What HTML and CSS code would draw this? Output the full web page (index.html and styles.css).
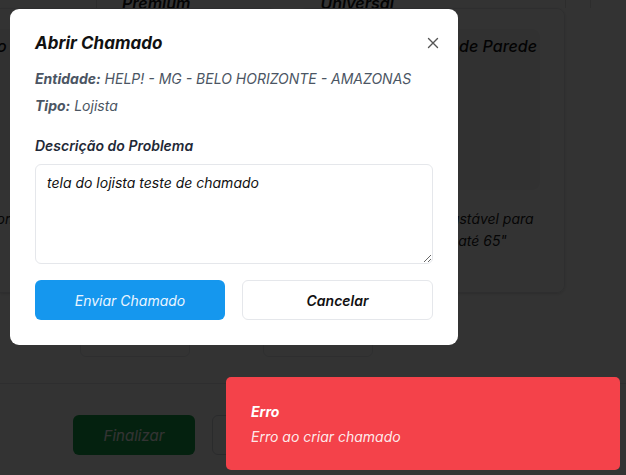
FILE: index.html
```html
<!DOCTYPE html>
<html lang="pt-BR">
<head>
<meta charset="utf-8">
<title>Abrir Chamado</title>
<link rel="stylesheet" href="styles.css">
</head>
<body>
<div class="page">
  <div class="titles">
    <span class="tname t1">Premium</span>
    <span class="tname t2">Universal</span>
  </div>
  <div class="cards">
    <div class="card c1">
      <div class="cinner"><span class="ctitle">Suporte Fixo</span></div>
      <p class="cdesc">Suporte fixo para TVs com</p>
    </div>
    <div class="card c2">
      <div class="cinner"><span class="ctitle">Suporte de Parede</span></div>
      <p class="cdesc">Suporte ajustável para<br>televisores até 65"</p>
    </div>
  </div>
  <div class="pills">
    <div class="pill"></div>
    <div class="pill"></div>
  </div>
  <div class="footer">
    <button class="finalizar">Finalizar</button>
    <button class="voltar">Voltar</button>
  </div>
</div>

<div class="overlay"></div>

<div class="modal">
  <h2 class="mtitle">Abrir Chamado</h2>
  <button class="close" aria-label="Fechar">
    <svg width="12" height="12" viewBox="0 0 12 12"><path d="M1.5 1.5 L10.5 10.5 M10.5 1.5 L1.5 10.5" stroke="#555" stroke-width="1.4" fill="none" stroke-linecap="round"/></svg>
  </button>
  <p class="info"><b>Entidade:</b> HELP! - MG - BELO HORIZONTE - AMAZONAS</p>
  <p class="info"><b>Tipo:</b> Lojista</p>
  <label class="lbl">Descrição do Problema</label>
  <textarea class="txt">tela do lojista teste de chamado</textarea>
  <div class="actions">
    <button class="btn primary">Enviar Chamado</button>
    <button class="btn secondary">Cancelar</button>
  </div>
</div>

<div class="toast">
  <div class="ttitle">Erro</div>
  <div class="tmsg">Erro ao criar chamado</div>
</div>
</body>
</html>
```

FILE: styles.css
```css
* { box-sizing: border-box; }
html, body { margin: 0; padding: 0; }
body {
  width: 626px;
  height: 475px;
  overflow: hidden;
  font-family: Inter, "Noto Sans", sans-serif;
  font-style: italic;
  background: #fff;
}

/* underlying page */
.titles {
  height: 8px;
  display: flex;
  align-items: flex-end;
  background:
    linear-gradient(#e0e0e0, #e0e0e0) 96px 0 / 1px 100% no-repeat,
    linear-gradient(#e0e0e0, #e0e0e0) 123px 0 / 1px 100% no-repeat,
    linear-gradient(#e0e0e0, #e0e0e0) 332px 0 / 1px 100% no-repeat,
    linear-gradient(#e0e0e0, #e0e0e0) 357px 0 / 1px 100% no-repeat,
    linear-gradient(#e0e0e0, #e0e0e0) 565px 0 / 1px 100% no-repeat,
    linear-gradient(#e0e0e0, #e0e0e0) 590px 0 / 1px 100% no-repeat;
}
.tname {
  font-weight: 600;
  font-size: 16px;
  line-height: 16px;
  color: #111;
  margin-bottom: -3px;
}
.t1 { margin-left: 122px; }
.t2 { margin-left: 130px; }
.cards {
  display: grid;
  grid-template-columns: 277px 267px;
  gap: 21px;
}
.card {
  border: 1px solid #e5e7eb;
  border-radius: 8px;
  height: 285px;
  box-shadow: 0 1px 3px rgba(0,0,0,0.15);
}
.c1 { border-left: none; border-radius: 0 8px 8px 0; }
.cinner {
  background: #f3f4f6;
  border-radius: 8px;
  height: 161px;
  margin: 20px 24px 0;
  padding: 7px 3px 0 0;
  text-align: right;
}
.c1 .cinner { margin-left: -20px; text-align: left; padding-left: 0; }
.c1 .ctitle { display: inline-block; margin-left: -70px; }
.ctitle { font-size: 16px; line-height: 20px; color: #111; font-weight: 500; }
.cdesc {
  font-size: 14px; color: #222; line-height: 22px;
  margin: 18px 0 0 84px;
}
.c1 .cdesc {
  margin-left: -160px;
  width: 170px;
  text-align: right;
  white-space: nowrap;
}
.pills {
  display: flex;
  gap: 73px;
  padding-left: 80px;
  margin-top: 27px;
}
.pill {
  width: 110px; height: 37px;
  border: 1px solid #e5e7eb; border-radius: 6px;
}
.footer {
  border-top: 1px solid #e5e7eb;
  margin-top: 26px;
  padding: 31px 0 0 73px;
  display: flex;
  gap: 17px;
}
.footer button {
  font-family: inherit; font-style: italic; font-size: 15px;
  width: 122px; height: 40px; border-radius: 6px;
}
.finalizar { background: #16a34a; color: #fff; border: none; }
.voltar { background: #fff; border: 1px solid #d1d5db; color: #111; }

.overlay {
  position: fixed; inset: 0;
  background: rgba(0,0,0,0.8);
}

/* modal */
.modal {
  position: fixed;
  left: 10px; top: 9px;
  width: 448px; height: 336px;
  background: #fff;
  border-radius: 9px;
  padding: 22px 25px 25px;
  display: flex;
  flex-direction: column;
  color: #111;
}
.mtitle {
  margin: 0;
  font-size: 17px;
  line-height: 24px;
  font-weight: 700;
  color: #111;
}
.close {
  position: absolute;
  right: 19px; top: 28px;
  background: none; border: none; padding: 0;
  width: 12px; height: 12px; display: flex;
}
.info {
  margin: 15px 0 0;
  font-size: 14px;
  line-height: 17px;
  color: #4b5563;
}
.info + .info { margin-top: 10px; }
.info b { font-weight: 700; color: #4b5563; }
.lbl {
  display: block;
  margin-top: 23px;
  font-size: 14px;
  line-height: 17px;
  font-weight: 600;
  color: #1f2937;
}
.txt {
  margin-top: 10px;
  width: 398px;
  height: 100px;
  flex: none;
  border: 1px solid #e5e7eb;
  border-radius: 6px;
  padding: 9px 11px;
  font-family: inherit;
  font-style: italic;
  font-size: 14px;
  line-height: 18px;
  color: #111;
  resize: vertical;
  outline: none;
}
.actions {
  margin-top: 16px;
  display: grid;
  grid-template-columns: 190px 191px;
  gap: 17px;
}
.btn {
  height: 40px;
  border-radius: 6px;
  font-family: inherit;
  font-style: italic;
  font-size: 14px;
  cursor: pointer;
}
.primary { background: #1597ee; color: #eaf5ff; border: none; }
.secondary { background: #fff; color: #111; border: 1px solid #e5e7eb; font-weight: 600; }

/* toast */
.toast {
  position: fixed;
  left: 226px; top: 377px;
  width: 394px; height: 93px;
  background: #f4424a;
  border-radius: 5px;
  padding: 26px 25px;
  color: #fff;
}
.ttitle { font-size: 14px; line-height: 17px; font-weight: 700; }
.tmsg { font-size: 14px; line-height: 17px; margin-top: 8px; color: rgba(255,255,255,0.9); }
```
